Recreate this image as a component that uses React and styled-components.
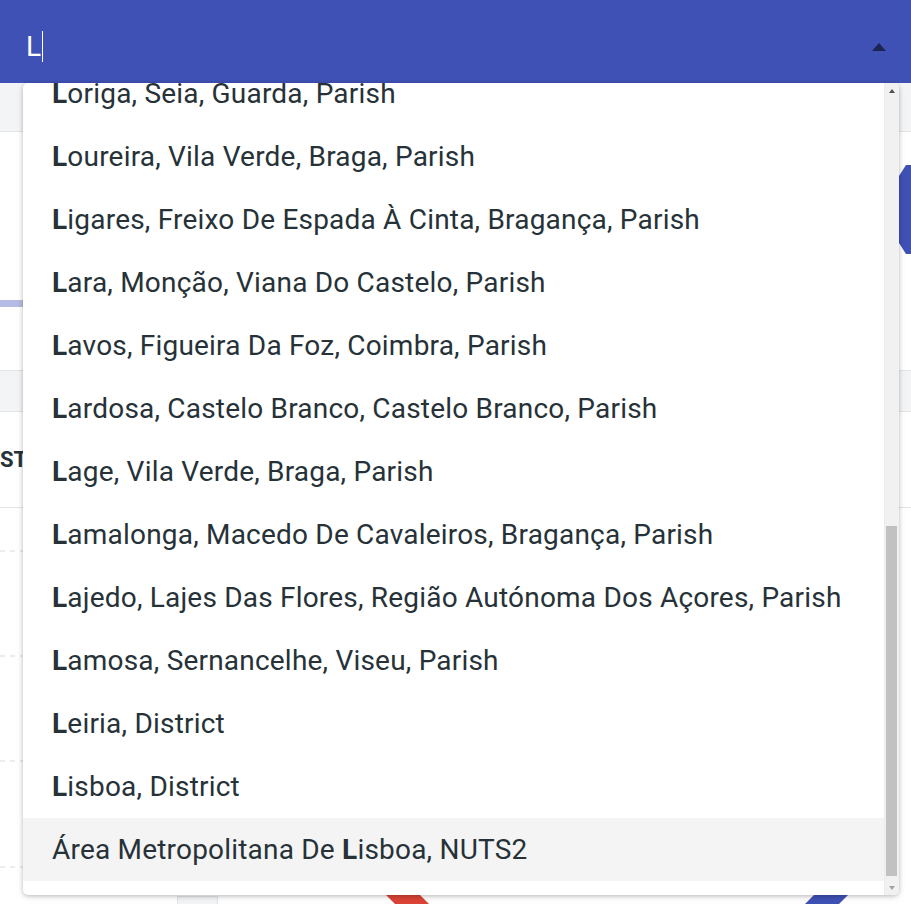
import React from "react";
import styled, { createGlobalStyle } from "styled-components";

const GlobalStyle = createGlobalStyle`
  html, body {
    margin: 0;
    padding: 0;
    background: #ffffff;
  }
  body {
    font-family: 'Roboto', 'Liberation Sans', sans-serif;
    overflow: hidden;
  }
`;

const Page = styled.div`
  position: relative;
  width: 911px;
  height: 904px;
  overflow: hidden;
  background: #fff;
`;

const Header = styled.div`
  height: 83px;
  background: #3f51b5;
  display: flex;
  align-items: center;
  padding: 0 25px 0 26px;
  box-sizing: border-box;
`;

const SearchField = styled.div`
  flex: 1;
  display: flex;
  align-items: center;
  color: #ffffff;
  font-size: 28px;
  line-height: 32px;
  padding-top: 10px;
`;

const Caret = styled.span`
  display: inline-block;
  width: 1px;
  height: 31px;
  margin-left: 1px;
  background: #ffffff;
`;

const Toggle = styled.span`
  width: 0;
  height: 0;
  border-left: 7px solid transparent;
  border-right: 7px solid transparent;
  border-bottom: 8px solid rgba(0, 0, 0, 0.55);
  margin-top: 10px;
`;

/* background dashboard */
const Content = styled.div`
  display: flex;
  flex-direction: column;
`;

const Tabs = styled.div`
  height: 48px;
  background: #f3f4f6;
  border-bottom: 1px solid #e3e4e6;
`;

const Overview = styled.div`
  height: 238px;
  display: flex;
  justify-content: space-between;
  align-items: flex-start;
`;

const StatCard = styled.div`
  flex: 1;
  padding-top: 168px;
`;

const Progress = styled.div`
  height: 7px;
  width: 600px;
  background: #b5bbe2;
`;

const Badge = styled.svg`
  margin-top: 33px;
  margin-right: -78px;
  flex-shrink: 0;
`;

const SectionBar = styled.div`
  height: 40px;
  background: #f3f4f6;
  border-top: 1px solid #e3e4e6;
  border-bottom: 1px solid #e3e4e6;
`;

const SectionTitle = styled.div`
  height: 95px;
  display: flex;
  align-items: center;
  font-size: 22px;
  font-weight: 700;
  color: #263238;
  border-bottom: 1px solid #e3e4e6;
`;

const Chart = styled.svg`
  display: block;
`;

/* dropdown */
const Dropdown = styled.div`
  position: absolute;
  top: 83px;
  left: 23px;
  width: 876px;
  height: 812px;
  background: #ffffff;
  border-radius: 5px;
  box-shadow: 0 1px 4px rgba(0, 0, 0, 0.22), 0 2px 8px rgba(0, 0, 0, 0.08);
  display: flex;
  overflow: hidden;
`;

const List = styled.ul`
  flex: 1;
  margin: 0;
  padding: 0 0 14px;
  list-style: none;
  display: flex;
  flex-direction: column;
  justify-content: flex-end;
  overflow: hidden;
`;

const Option = styled.li`
  flex-shrink: 0;
  height: 63px;
  line-height: 63px;
  padding-left: 29px;
  font-size: 28px;
  letter-spacing: 0.2px;
  color: #263238;
  white-space: nowrap;
  background: ${(p) => (p.$active ? "#f4f4f4" : "transparent")};
`;

const Match = styled.b`
  font-weight: 700;
`;

const Scrollbar = styled.div`
  width: 15px;
  display: flex;
  flex-direction: column;
  background: #f1f1f1;
  border-left: 1px solid #ececec;
  box-sizing: border-box;
`;

const ScrollButton = styled.div`
  height: 15px;
  display: flex;
  align-items: center;
  justify-content: center;

  &::before {
    content: "";
    width: 0;
    height: 0;
    border-left: 3px solid transparent;
    border-right: 3px solid transparent;
    ${(p) =>
      p.$down
        ? "border-top: 4px solid #a3a3a3;"
        : "border-bottom: 4px solid #505050;"}
  }
`;

const Track = styled.div`
  flex: 1;
  display: flex;
  flex-direction: column;
  justify-content: flex-end;
  padding: 0 2px 4px 1px;
`;

const Thumb = styled.div`
  height: 350px;
  background: #c1c1c1;
`;

const options = [
  "Lousada, Porto, Municipality",
  "Loriga, Seia, Guarda, Parish",
  "Loureira, Vila Verde, Braga, Parish",
  "Ligares, Freixo De Espada À Cinta, Bragança, Parish",
  "Lara, Monção, Viana Do Castelo, Parish",
  "Lavos, Figueira Da Foz, Coimbra, Parish",
  "Lardosa, Castelo Branco, Castelo Branco, Parish",
  "Lage, Vila Verde, Braga, Parish",
  "Lamalonga, Macedo De Cavaleiros, Bragança, Parish",
  "Lajedo, Lajes Das Flores, Região Autónoma Dos Açores, Parish",
  "Lamosa, Sernancelhe, Viseu, Parish",
  "Leiria, District",
  "Lisboa, District",
  "Área Metropolitana De Lisboa, NUTS2",
];

const query = "L";

const highlight = (text) => {
  const re = new RegExp(`(^|\\s)(${query})`, "i");
  const m = re.exec(text);
  if (!m) return text;
  const start = m.index + m[1].length;
  return (
    <>
      {text.slice(0, start)}
      <Match>{text.slice(start, start + query.length)}</Match>
      {text.slice(start + query.length)}
    </>
  );
};

const gridLines = [43, 148, 253, 359];

export default function App() {
  return (
    <Page>
      <GlobalStyle />
      <Header>
        <SearchField>
          {query}
          <Caret />
        </SearchField>
        <Toggle />
      </Header>

      <Content>
        <Tabs />
        <Overview>
          <StatCard>
            <Progress />
          </StatCard>
          <Badge width="90" height="89" viewBox="0 0 90 89">
            <path d="M7 0 L83 0 L90 11 L90 78 L83 89 L7 89 L0 78 L0 11 Z" fill="#3f51b5" />
          </Badge>
        </Overview>
        <SectionBar />
        <SectionTitle>STATISTICS</SectionTitle>
        <Chart width="911" height="397" viewBox="0 0 911 397">
          {gridLines.map((y) => (
            <line
              key={y}
              x1="0"
              x2="860"
              y1={y}
              y2={y}
              stroke="#d9d9d9"
              strokeDasharray="5 5"
            />
          ))}
          <rect x="177.5" y="388.5" width="40" height="20" fill="#f3f4f6" stroke="#e3e4e6" />
          <line x1="318" y1="302" x2="498" y2="482" stroke="#db4437" strokeWidth="24" />
          <line x1="866" y1="352" x2="746" y2="472" stroke="#3f51b5" strokeWidth="24" />
        </Chart>
      </Content>

      <Dropdown>
        <List>
          {options.map((o, i) => (
            <Option key={o} $active={i === options.length - 1}>
              {highlight(o)}
            </Option>
          ))}
        </List>
        <Scrollbar>
          <ScrollButton />
          <Track>
            <Thumb />
          </Track>
          <ScrollButton $down />
        </Scrollbar>
      </Dropdown>
    </Page>
  );
}
